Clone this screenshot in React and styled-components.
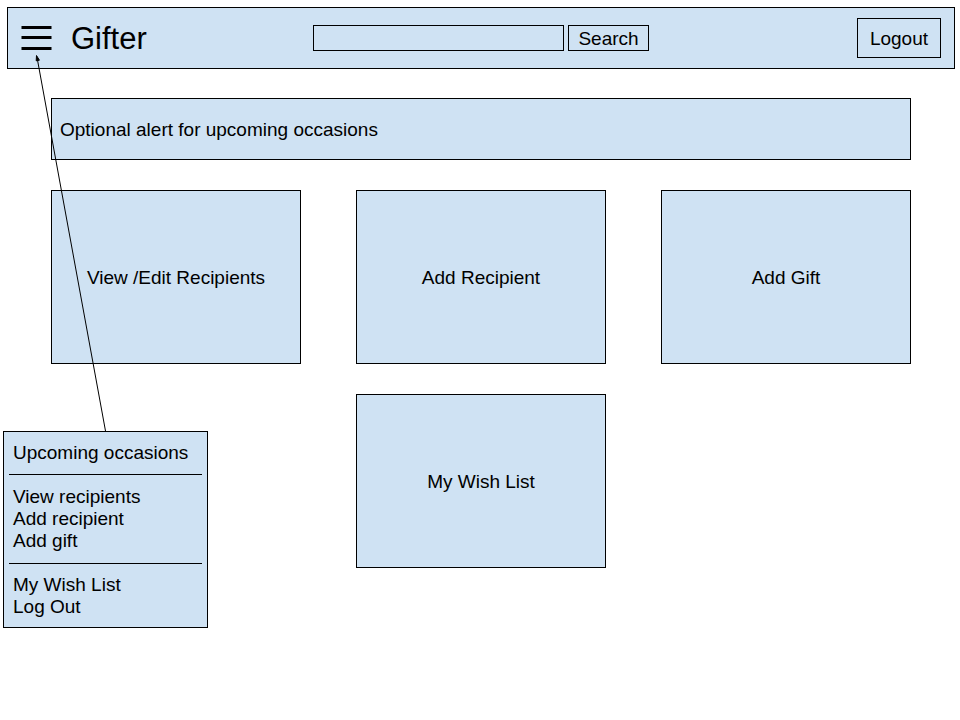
import React from "react";
import styled, { createGlobalStyle } from "styled-components";

const INK = "#000000";
const FILL = "#cfe2f3";

const GlobalStyle = createGlobalStyle`
  *, *::before, *::after { box-sizing: border-box; }
  body {
    margin: 0;
    background: #ffffff;
    color: ${INK};
    font-family: "Liberation Sans", Arial, Helvetica, sans-serif;
    font-size: 19px;
    line-height: 22px;
  }
  button, input { font: inherit; color: inherit; }
`;

const Page = styled.div`
  position: relative;
  min-height: 100vh;
  padding: 7px 5px 0 7px;
`;

const Header = styled.header`
  display: grid;
  grid-template-columns: 1fr auto 1fr;
  align-items: center;
  padding: 10px 13px;
  background: ${FILL};
  border: 1px solid ${INK};
`;

const Brand = styled.div`
  display: flex;
  align-items: center;
  gap: 19px;
`;

const MenuButton = styled.button`
  display: flex;
  padding: 0;
  border: 0;
  background: none;
  cursor: pointer;
`;

const Title = styled.h1`
  margin: 0;
  padding-top: 2px;
  font-size: 31px;
  line-height: 36px;
  font-weight: 400;
`;

const SearchForm = styled.form`
  display: flex;
  gap: 4px;
`;

const SearchInput = styled.input`
  width: 251px;
  height: 26px;
  padding: 0 8px;
  border: 1px solid ${INK};
  border-radius: 0;
  background: transparent;
`;

const OutlineButton = styled.button`
  height: ${(p) => (p.$tall ? 40 : 26)}px;
  padding: 2px ${(p) => (p.$tall ? 12 : 9)}px 0;
  border: 1px solid ${INK};
  background: transparent;
  cursor: pointer;
`;

const HeaderActions = styled.div`
  display: flex;
  justify-content: flex-end;
`;

const Main = styled.main`
  display: grid;
  gap: 30px;
  padding: 29px 44px 30px;
`;

const Alert = styled.div`
  padding: 20px 8px 18px;
  border: 1px solid ${INK};
  background: ${FILL};
`;

const Cards = styled.nav`
  display: grid;
  grid-template-columns: repeat(3, 1fr);
  gap: 30px 55px;
`;

const Card = styled.a`
  display: flex;
  align-items: center;
  justify-content: center;
  min-height: 174px;
  padding-top: 2px;
  grid-column: ${(p) => (p.$middle ? 2 : "auto")};
  border: 1px solid ${INK};
  background: ${FILL};
  color: inherit;
  text-decoration: none;
`;

const Callout = styled.div`
  position: absolute;
  top: 54px;
  left: 3px;
  width: 205px;
  pointer-events: none;
`;

const Arrow = styled.svg`
  display: block;
`;

const Menu = styled.nav`
  padding: 10px 5px 9px;
  border: 1px solid ${INK};
  background: ${FILL};
  pointer-events: auto;
`;

const MenuGroup = styled.ul`
  margin: 0;
  padding: 0 4px;
  list-style: none;

  & + & {
    position: relative;
    margin-top: 22px;
  }

  & + &::before {
    content: "";
    position: absolute;
    top: -12px;
    left: 0;
    right: 0;
    border-top: 1px solid ${INK};
  }

  & + & + &::before {
    top: -11px;
  }
`;

const MenuLink = styled.a`
  display: block;
  color: inherit;
  text-decoration: none;
`;

const CARDS = [
  { label: "View /Edit Recipients" },
  { label: "Add Recipient" },
  { label: "Add Gift" },
  { label: "My Wish List", middle: true },
];

const MENU = [
  ["Upcoming occasions"],
  ["View recipients", "Add recipient", "Add gift"],
  ["My Wish List", "Log Out"],
];

export default function App() {
  return (
    <>
      <GlobalStyle />
      <Page>
        <Header>
          <Brand>
            <MenuButton type="button" aria-label="Menu">
              <svg width="31" height="24" viewBox="0 0 31 24" aria-hidden="true">
                <path d="M0.5 1.5H30.5M0.5 11.5H30.5M0.5 22.5H30.5" stroke={INK} strokeWidth="2.8" />
              </svg>
            </MenuButton>
            <Title>Gifter</Title>
          </Brand>
          <SearchForm role="search" onSubmit={(e) => e.preventDefault()}>
            <SearchInput type="text" aria-label="Search" />
            <OutlineButton type="submit">Search</OutlineButton>
          </SearchForm>
          <HeaderActions>
            <OutlineButton type="button" $tall>Logout</OutlineButton>
          </HeaderActions>
        </Header>

        <Main>
          <Alert role="status">Optional alert for upcoming occasions</Alert>
          <Cards aria-label="Actions">
            {CARDS.map((card) => (
              <Card key={card.label} href="#" $middle={card.middle}>{card.label}</Card>
            ))}
          </Cards>
        </Main>

        <Callout>
          <Arrow width="205" height="377" viewBox="0 0 205 377" aria-hidden="true">
            <path d="M102.5 377L34.5 6" fill="none" stroke={INK} strokeWidth="1" />
            <path d="M33.5 1.5L36.4 6.2L33.2 6.8Z" fill={INK} stroke={INK} strokeWidth="1" />
          </Arrow>
          <Menu aria-label="Main menu">
            {MENU.map((group) => (
              <MenuGroup key={group[0]}>
                {group.map((label) => (
                  <li key={label}><MenuLink href="#">{label}</MenuLink></li>
                ))}
              </MenuGroup>
            ))}
          </Menu>
        </Callout>
      </Page>
    </>
  );
}
